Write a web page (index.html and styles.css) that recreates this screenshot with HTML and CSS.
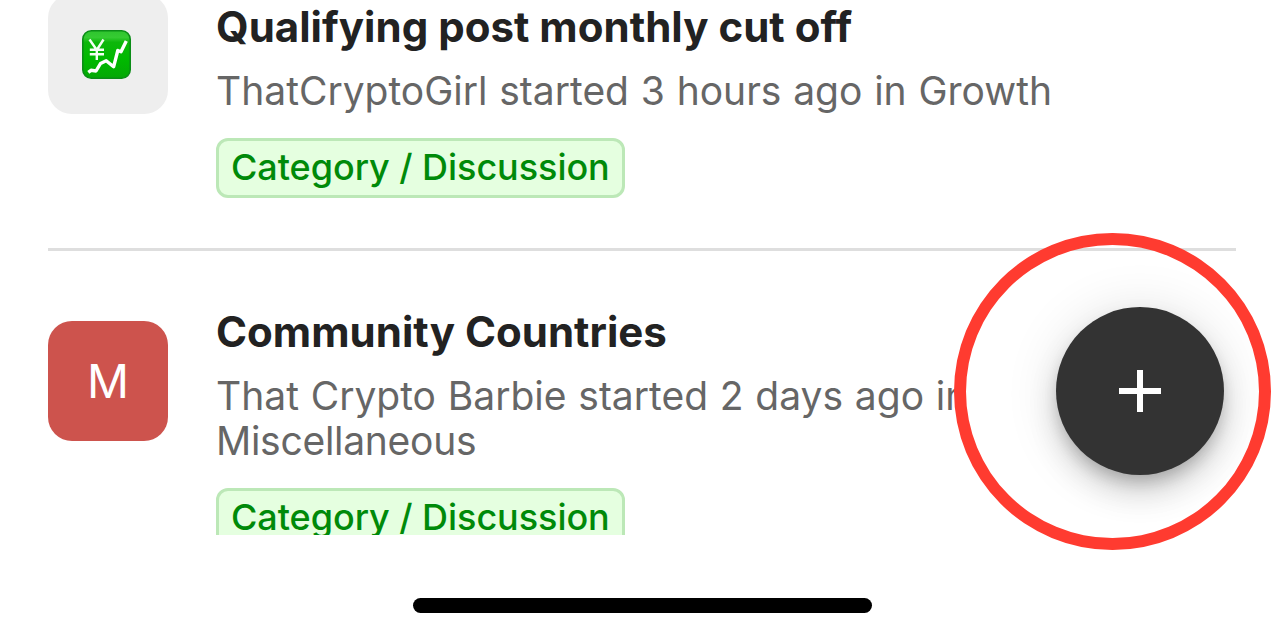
FILE: index.html
```
<!DOCTYPE html>
<html lang="en">
<head>
<meta charset="utf-8">
<title>Discussions</title>
<link rel="stylesheet" href="styles.css">
</head>
<body>
<main class="screen">
  <section class="list">
    <article class="topic">
      <div class="avatar avatar-emoji">
        <svg class="emoji" viewBox="0 0 49 49" role="img" aria-label="Chart increasing with yen">
          <defs>
            <linearGradient id="face" x1="0" y1="0" x2="0" y2="1">
              <stop offset="0" stop-color="#2fc52f"/>
              <stop offset=".14" stop-color="#35cb32"/>
              <stop offset=".24" stop-color="#0db70b"/>
              <stop offset=".6" stop-color="#00b900"/>
              <stop offset="1" stop-color="#04a806"/>
            </linearGradient>
          </defs>
          <rect x=".8" y=".8" width="47.4" height="47.4" rx="8.5" fill="url(#face)" stroke="#0b8d17" stroke-width="1.6"/>
          <path d="M7.5 9.5 14.8 20 21.5 9.5M14.8 20V30M7.8 19.7H22M7.8 24.2H22" fill="none" stroke="#f4fff4" stroke-width="2.4"/>
          <path d="M6.3 42.3 9 40.3 14 41 18.5 33.5 24.2 30.8 31.6 36.8 35.8 20.5 39 21.8 44.3 11" fill="none" stroke="#fff" stroke-width="3.4" stroke-linejoin="round"/>
        </svg>
      </div>
      <div class="summary">
        <h2 class="title">Qualifying post monthly cut off</h2>
        <p class="meta">ThatCryptoGirl started 3 hours ago in Growth</p>
      </div>
      <span class="tag">Category / Discussion</span>
    </article>
    <article class="topic">
      <div class="avatar avatar-letter">M</div>
      <div class="summary">
        <h2 class="title">Community Countries</h2>
        <p class="meta">That Crypto Barbie started 2 days ago in<br><span class="meta-category">Miscellaneous</span></p>
      </div>
      <span class="tag">Category / Discussion</span>
    </article>
  </section>
  <footer class="home"><div class="home-bar"></div></footer>
  <button class="fab" aria-label="New topic">
    <svg class="plus" viewBox="0 0 42 42"><path d="M21 0V42M0 21H42" stroke="#fff" stroke-width="6"/></svg>
  </button>
  <div class="highlight"></div>
</main>
</body>
</html>
```

FILE: styles.css
```
* { box-sizing: border-box; }

body {
  margin: 0;
  background: #fff;
  font-family: Inter, "Liberation Sans", sans-serif;
}

.screen {
  position: relative;
  height: 637px;
  overflow: hidden;
}

.list {
  height: 535px;
  padding: 0 48px;
  overflow: hidden;
}

.topic {
  display: grid;
  grid-template-columns: 120px 1fr;
  column-gap: 48px;
  padding: 56px 0 50px;
}

.topic:first-child {
  margin-top: -54px;
  border-bottom: 3px solid #dedede;
}

.avatar {
  display: flex;
  align-items: center;
  justify-content: center;
  align-self: center;
  width: 120px;
  height: 120px;
  margin: -8px 0;
  border-radius: 24px;
  transform: translateY(-4px);
}

.avatar-emoji {
  background: #eee;
  padding: 1px 3px 0 0;
}

.emoji { width: 49px; height: 49px; }

.avatar-letter {
  background: #cd534d;
  color: #fff;
  font-size: 46.5px;
  font-weight: 400;
}

.title {
  margin: 0;
  color: #222;
  font-size: 42px;
  line-height: 50px;
  font-weight: 700;
  letter-spacing: .02px;
}

.meta {
  margin: 16px 0 0;
  color: #666;
  font-size: 39px;
  line-height: 45px;
  font-weight: 400;
  word-spacing: .8px;
  white-space: nowrap;
}

.meta-category { letter-spacing: -.28px; }

.tag {
  grid-column: 2;
  justify-self: start;
  width: 409px;
  height: 60px;
  margin-top: 25px;
  padding-left: 12px;
  border: 3px solid #bce8b7;
  border-radius: 12px;
  background: #e5ffe0;
  color: #008a09;
  font-size: 36px;
  line-height: 52px;
  font-weight: 500;
  letter-spacing: -.05px;
  white-space: nowrap;
}

.home {
  display: flex;
  justify-content: center;
  padding-top: 63px;
}

.home-bar {
  width: 459px;
  height: 15px;
  margin-left: 1px;
  border-radius: 8px;
  background: #000;
}

.fab {
  position: absolute;
  left: 1056px;
  top: 307px;
  display: flex;
  align-items: center;
  justify-content: center;
  width: 168px;
  height: 168px;
  padding: 0;
  border: 0;
  border-radius: 50%;
  background: #333;
  box-shadow: 0 9px 15px -3px rgba(0, 0, 0, .2), 0 18px 30px rgba(0, 0, 0, .14), 0 3px 54px rgba(0, 0, 0, .12);
}

.plus { width: 42px; height: 42px; }

.highlight {
  position: absolute;
  left: 954px;
  top: 232.5px;
  width: 317px;
  height: 317.5px;
  border: 12px solid #ff3b30;
  border-radius: 50%;
}
```
